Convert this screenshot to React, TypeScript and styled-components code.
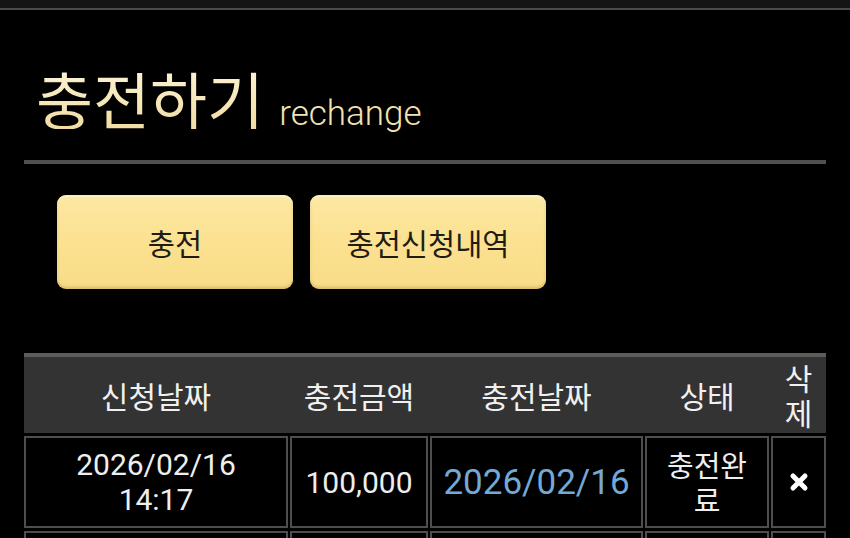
import React from "react";
import styled, { createGlobalStyle } from "styled-components";

const Global = createGlobalStyle`
  html, body { margin: 0; padding: 0; background: #000; }
  body { font-family: Roboto, "Noto Sans CJK KR", sans-serif; color: #eee; }
  * { box-sizing: border-box; }
`;

const TopBar = styled.div`
  height: 10px;
  background: #141414;
  border-bottom: 2px solid #4a4a4a;
`;

const Content = styled.main`
  padding: 0 24px;
`;

const TitleRow = styled.h1`
  margin: 0;
  padding: 57px 0 0 12px;
  height: 154px;
  display: flex;
  align-items: baseline;
  gap: 15px;
  font-weight: 400;
  border-bottom: 4px solid #505050;
`;

const TitleMain = styled.span`
  font-family: "Noto Sans CJK KR", sans-serif;
  font-size: 62px;
  line-height: 1;
  color: #f6e7b9;
  background: linear-gradient(180deg, #fcf3d6 0%, #f1dda2 100%);
  -webkit-background-clip: text;
  background-clip: text;
  -webkit-text-fill-color: transparent;
`;

const TitleSub = styled.span`
  font-family: Roboto, sans-serif;
  font-size: 35px;
  font-weight: 300;
  line-height: 1;
  color: #f3e3b0;
`;

const ButtonRow = styled.div`
  display: flex;
  gap: 17px;
  padding: 31px 0 0 33px;
  height: 189px;
`;

const TabButton = styled.button`
  width: 236px;
  height: 94px;
  border: none;
  border-radius: 9px;
  background: linear-gradient(180deg, #fde8a3 0%, #fbe190 50%, #f8dc89 100%);
  box-shadow: inset 0 -2px 3px rgba(150, 110, 20, 0.3), inset 0 2px 2px rgba(255, 250, 225, 0.6);
  font-family: "Noto Sans CJK KR", sans-serif;
  font-size: 29.5px;
  color: #1f1c14;
  cursor: pointer;
`;

const cols = "264px 138px 213px 124px 55px";

const HeadRow = styled.div`
  display: grid;
  grid-template-columns: ${cols};
  column-gap: 2px;
  background: #333333;
  border-top: 4px solid #5c5c5c;
  height: 80px;
`;

const HeadCell = styled.div`
  display: flex;
  align-items: center;
  justify-content: center;
  text-align: center;
  font-family: "Noto Sans CJK KR", sans-serif;
  font-size: 30px;
  line-height: 35px;
  color: #f0f0f0;
  padding: 0 6px;
  word-break: break-all;
`;

const BodyRow = styled.div`
  display: grid;
  grid-template-columns: ${cols};
  column-gap: 2px;
  margin-top: 3px;
`;

const Cell = styled.div<{ $blue?: boolean; $big?: boolean }>`
  display: flex;
  align-items: center;
  justify-content: center;
  text-align: center;
  height: 92px;
  border: 2px solid #4e4e4e;
  padding: 0 9px;
  font-family: Roboto, "Noto Sans CJK KR", sans-serif;
  font-weight: 400;
  font-size: ${(p) => (p.$big ? "35px" : "30px")};
  line-height: 35px;
  color: ${(p) => (p.$blue ? "#72a9d6" : "#eeeeee")};
  word-break: break-all;
`;

const KoCell = styled(Cell)`
  font-family: "Noto Sans CJK KR", sans-serif;
  font-size: 29px;
`;

const DeleteIcon = () => (
  <svg width="20" height="20" viewBox="0 0 20 20">
    <path d="M4 4 L16 16 M16 4 L4 16" stroke="#fff" strokeWidth="5" strokeLinecap="round" />
  </svg>
);

export default function App() {
  return (
    <>
      <Global />
      <TopBar />
      <Content>
        <TitleRow>
          <TitleMain>충전하기</TitleMain>
          <TitleSub>rechange</TitleSub>
        </TitleRow>
        <ButtonRow>
          <TabButton>충전</TabButton>
          <TabButton>충전신청내역</TabButton>
        </ButtonRow>
        <HeadRow>
          <HeadCell>신청날짜</HeadCell>
          <HeadCell>충전금액</HeadCell>
          <HeadCell>충전날짜</HeadCell>
          <HeadCell>상태</HeadCell>
          <HeadCell>삭제</HeadCell>
        </HeadRow>
        <BodyRow>
          <Cell>
            2026/02/16
            <br />
            14:17
          </Cell>
          <Cell>100,000</Cell>
          <Cell $blue $big>
            2026/02/16
          </Cell>
          <KoCell>충전완료</KoCell>
          <Cell>
            <DeleteIcon />
          </Cell>
        </BodyRow>
        <BodyRow>
          <Cell />
          <Cell />
          <Cell />
          <Cell />
          <Cell />
        </BodyRow>
      </Content>
    </>
  );
}
